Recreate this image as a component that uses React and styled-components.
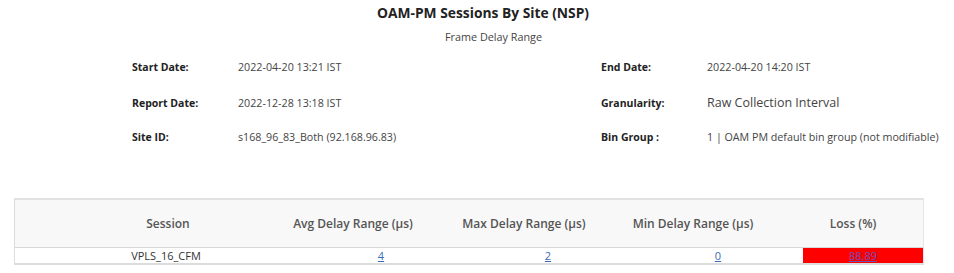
import styled, { createGlobalStyle } from "styled-components";

const GlobalStyle = createGlobalStyle`
  body {
    margin: 0;
    background: #fff;
    font-family: "Open Sans", "Liberation Sans", sans-serif;
    color: #333;
  }
`;

const report = {
  title: "OAM-PM Sessions By Site (NSP)",
  subtitle: "Frame Delay Range",
  left: [
    ["Start Date:", "2022-04-20 13:21 IST"],
    ["Report Date:", "2022-12-28 13:18 IST"],
    ["Site ID:", "s168_96_83_Both (92.168.96.83)"],
  ],
  right: [
    ["End Date:", "2022-04-20 14:20 IST", false],
    ["Granularity:", "Raw Collection Interval", true],
    ["Bin Group :", "1 | OAM PM default bin group (not modifiable)", false],
  ],
};

// header labels, with how far the label sits off the column centre
const columns = [
  { label: "Session", shift: 11 },
  { label: "Avg Delay Range (µs)", shift: -28 },
  { label: "Max Delay Range (µs)", shift: -24 },
  { label: "Min Delay Range (µs)", shift: -25 },
  { label: "Loss (%)", shift: -10 },
];

const rows = [{ session: "VPLS_16_CFM", avg: 4, max: 2, min: 0, loss: "88.89" }];

function App() {
  return (
    <Page>
      <GlobalStyle />
      <Title>{report.title}</Title>
      <Subtitle>{report.subtitle}</Subtitle>

      <InfoGrid>
        {report.left.map(([label, value], i) => {
          const [rLabel, rValue, big] = report.right[i];
          return (
            <InfoRow key={label}>
              <Label>{label}</Label>
              <Value>{value}</Value>
              <Label>{rLabel}</Label>
              <Value $big={big}>{rValue}</Value>
            </InfoRow>
          );
        })}
      </InfoGrid>

      <Table>
        <HeaderRow>
          {columns.map((c) => (
            <HeaderCell key={c.label} $shift={c.shift}>
              {c.label}
            </HeaderCell>
          ))}
        </HeaderRow>
        {rows.map((r) => (
          <BodyRow key={r.session}>
            <Cell $first>{r.session}</Cell>
            <Cell><Link>{r.avg}</Link></Cell>
            <Cell><Link>{r.max}</Link></Cell>
            <Cell><Link>{r.min}</Link></Cell>
            <Cell $alert><Link $visited>{r.loss}</Link></Cell>
          </BodyRow>
        ))}
      </Table>
    </Page>
  );
}

const Page = styled.div`
  width: 954px;
  padding-top: 3px;
`;

const Title = styled.h1`
  margin: 0;
  padding-left: 12px;
  text-align: center;
  font-size: 13.8px;
  font-weight: 700;
  line-height: 20px;
  color: #222;
`;

const Subtitle = styled.div`
  margin-top: 7px;
  padding-left: 33px;
  text-align: center;
  font-size: 10.8px;
  line-height: 14px;
  color: #444;
`;

const InfoGrid = styled.div`
  margin-top: 15px;
  padding-left: 132px;
  display: flex;
  flex-direction: column;
  gap: 19px;
`;

const InfoRow = styled.div`
  display: grid;
  grid-template-columns: 106px 363px 106px auto;
  align-items: center;
  height: 16px;
`;

const Label = styled.span`
  font-size: 10.5px;
  font-weight: 700;
  color: #222;
`;

const Value = styled.span`
  font-size: ${(p) => (p.$big ? "12.5px" : "10.7px")};
  color: #444;
`;

const Table = styled.div`
  margin: 53px 0 0 14px;
  width: 908px;
  border-top: 2px solid #e2e2e2;
  border-left: 1px solid #dcdcdc;
  border-right: 1px solid #e6e6e6;
  border-bottom: 2px solid #dcdcdc;
`;

const Columns = styled.div`
  display: grid;
  grid-template-columns: 284px 164px 170px 170px 120px;
`;

const HeaderRow = styled(Columns)`
  height: 47px;
  align-items: center;
  border-bottom: 1px solid #d8d8d8;
  background-color: #f8f8f8;
  background-image: radial-gradient(#ebebeb 0.6px, transparent 0.7px);
  background-size: 2px 2px;
`;

const HeaderCell = styled.div`
  text-align: center;
  font-size: 12px;
  font-weight: 600;
  color: #555;
  transform: translateX(${(p) => p.$shift}px);
`;

const BodyRow = styled(Columns)`
  height: 15px;
`;

const Cell = styled.div`
  display: flex;
  align-items: center;
  justify-content: center;
  padding-left: ${(p) => (p.$first ? "18px" : "0")};
  font-size: 11px;
  color: #333;
  background: ${(p) => (p.$alert ? "#ff0000" : "transparent")};
`;

const Link = styled.a`
  color: ${(p) => (p.$visited ? "#6a4fb8" : "#3d6cb0")};
  text-decoration: underline;
  cursor: pointer;
`;

export default App;
